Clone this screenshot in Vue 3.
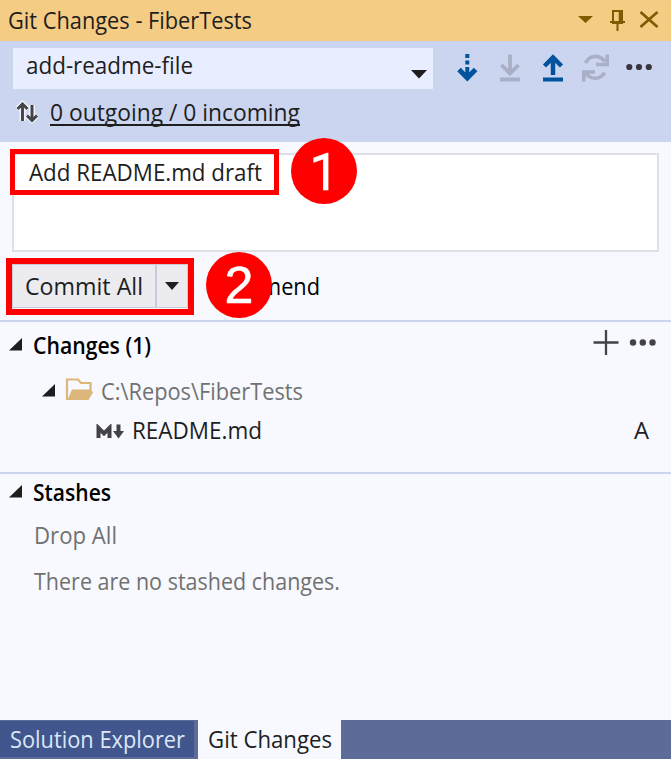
<script setup>
const label = (text, width) => ({ text, width })
const t = {
  title: label('Git Changes - FiberTests', 244),
  branch: label('add-readme-file', 167),
  sync: label('0 outgoing / 0 incoming', 250),
  message: label('Add README.md draft', 233),
  commit: label('Commit All', 118),
  amend: label('mend', 59),
  changes: label('Changes (1)', 118),
  path: label('C:\\Repos\\FiberTests', 202),
  file: label('README.md', 130),
  status: label('A', 15),
  stashes: label('Stashes', 78),
  drop: label('Drop All', 83),
  empty: label('There are no stashed changes.', 306),
  solution: label('Solution Explorer', 175),
  git: label('Git Changes', 124),
}
</script>

<template>
  <main class="panel">
    <header class="title">
      <svg class="text" :width="t.title.width" height="30"><text y="23" :textLength="t.title.width" lengthAdjust="spacingAndGlyphs">{{ t.title.text }}</text></svg>
      <svg class="window-icons" width="90" height="41" viewBox="0 0 90 41">
        <path d="M3 16h15l-7.500 7z" fill="#805900" />
        <path d="M38 11h9v12h-9zM35 22h15M42.500 23v8" fill="none" stroke="#805900" stroke-width="2" />
        <path d="M45 11v11" stroke="#805900" stroke-width="2.500" />
        <path d="M65.500 12l17 15M82.500 12l-17 15" stroke="#805900" stroke-width="2.700" />
      </svg>
    </header>

    <section class="toolbar">
      <div class="tools">
        <div class="combo">
          <svg class="text" :width="t.branch.width" height="30"><text y="23" :textLength="t.branch.width" lengthAdjust="spacingAndGlyphs">{{ t.branch.text }}</text></svg>
          <svg class="combo-arrow" width="16" height="9"><path d="M0 0h16L8 8.500z" fill="#1e1e1e" /></svg>
        </div>
        <svg class="tool-icons" width="238" height="41" viewBox="433 48 238 41">
          <g fill="none" stroke="#00539c" stroke-width="4">
            <path d="M467.300 54v4m0 2.500v4m0 2.500v9" />
            <path d="M459 69.500l8.300 8.500 8.300-8.500" stroke-width="5" />
            <path d="M553 75V58M544.500 66l8.500-8.500 8.500 8.500" stroke-width="4.500" />
            <path d="M543 79.500h20" />
          </g>
          <path d="M462 72h11l-5.500 8z" fill="#00539c" />
          <g fill="none" stroke="#a9afc5" stroke-width="3.800">
            <path d="M510 54.500v18M501.500 65l8.500 8.500 8.500-8.500M500 79.500h20" />
            <path d="M585.500 63c4-8.500 14-8.500 19.500-1.500M607.200 54.500v10H596M604.500 72.500c-4 7.500-13.500 7.500-18.500 1M583.700 81.500V72H595" stroke-width="3.600" />
          </g>
          <g fill="#37373d"><circle cx="629.300" cy="67" r="3.100" /><circle cx="639" cy="67" r="3.100" /><circle cx="648.800" cy="67" r="3.100" /></g>
        </svg>
      </div>
      <div class="sync">
        <svg width="22" height="26" viewBox="16 99 22 26" fill="none" stroke-linejoin="miter">
          <g stroke="#edf0fa" stroke-width="6"><path d="M22.500 121v-16M17 109.500l5.500-5.500 5.500 5.500M32 105v15M27 115l5 5 5-5" /></g>
          <g stroke="#424247" stroke-width="2.900"><path d="M22.500 121v-16M17.500 109l5-5 5 5M32 105v15M27 115.500l5 5 5-5" /></g>
        </svg>
        <a class="link"><svg class="text" :width="t.sync.width" height="30"><text y="23" :textLength="t.sync.width" lengthAdjust="spacingAndGlyphs">{{ t.sync.text }}</text></svg></a>
      </div>
    </section>

    <section class="commit">
      <div class="message">
        <svg class="text" :width="t.message.width" height="30"><text y="23" :textLength="t.message.width" lengthAdjust="spacingAndGlyphs">{{ t.message.text }}</text></svg>
      </div>
      <div class="actions">
        <div class="split-button">
          <div class="main-action"><svg class="text" :width="t.commit.width" height="30"><text y="23" :textLength="t.commit.width" lengthAdjust="spacingAndGlyphs">{{ t.commit.text }}</text></svg></div>
          <div class="drop-action"><svg width="14" height="9"><path d="M0 0h14L7 8z" fill="#1e1e1e" /></svg></div>
        </div>
        <svg class="text amend" :width="t.amend.width" height="30"><text y="23" :textLength="t.amend.width" lengthAdjust="spacingAndGlyphs">{{ t.amend.text }}</text></svg>
      </div>
      <div class="outline outline-one"></div>
      <div class="badge badge-one">1</div>
      <div class="outline outline-two"></div>
      <div class="badge badge-two">2</div>
    </section>

    <section class="changes">
      <div class="row heading">
        <svg class="triangle" width="13" height="13"><path d="M13 0v12.500H0z" /></svg>
        <svg class="text strong" :width="t.changes.width" height="30"><text y="23" :textLength="t.changes.width" lengthAdjust="spacingAndGlyphs">{{ t.changes.text }}</text></svg>
        <svg class="heading-icons" width="66" height="30" viewBox="592 328 66 30">
          <path d="M606 330v25M593.500 342.500h25" stroke="#424247" stroke-width="2.300" />
          <g fill="#424247"><circle cx="633" cy="342.500" r="3.200" /><circle cx="642.800" cy="342.500" r="3.200" /><circle cx="652.500" cy="342.500" r="3.200" /></g>
        </svg>
      </div>
      <div class="row folder">
        <svg class="triangle" width="13" height="13"><path d="M13 0v12.500H0z" /></svg>
        <svg class="folder-icon" width="28" height="23" viewBox="65 378 28 23">
          <path d="M68.500 399H67v-19.500h11l3 3.500h9.500v7" fill="none" stroke="#dcb67a" stroke-width="2.200" />
          <path d="M72 389.500h18v-1.500l3 4.500L88.500 400H67.500z" fill="#dcb67a" />
        </svg>
        <svg class="text muted" :width="t.path.width" height="30"><text y="23" :textLength="t.path.width" lengthAdjust="spacingAndGlyphs">{{ t.path.text }}</text></svg>
      </div>
      <div class="row file">
        <svg class="file-icon" width="28" height="15" viewBox="96 423 28 15" fill="none" stroke="#424247" stroke-width="4">
          <path d="M98.500 437v-10l5.500 5.500 5.500-5.500v10" />
          <path d="M118.500 423.500V434" /><path d="M113 430h11l-5.500 7.500z" fill="#424247" stroke="none" />
        </svg>
        <svg class="text" :width="t.file.width" height="30"><text y="23" :textLength="t.file.width" lengthAdjust="spacingAndGlyphs">{{ t.file.text }}</text></svg>
        <svg class="text status" :width="t.status.width" height="30"><text y="23" :textLength="t.status.width" lengthAdjust="spacingAndGlyphs">{{ t.status.text }}</text></svg>
      </div>
    </section>

    <section class="stashes">
      <div class="row heading">
        <svg class="triangle" width="13" height="13"><path d="M13 0v12.500H0z" /></svg>
        <svg class="text strong" :width="t.stashes.width" height="30"><text y="23" :textLength="t.stashes.width" lengthAdjust="spacingAndGlyphs">{{ t.stashes.text }}</text></svg>
      </div>
      <div class="row drop"><svg class="text muted" :width="t.drop.width" height="30"><text y="23" :textLength="t.drop.width" lengthAdjust="spacingAndGlyphs">{{ t.drop.text }}</text></svg></div>
      <div class="row empty"><svg class="text muted" :width="t.empty.width" height="30"><text y="23" :textLength="t.empty.width" lengthAdjust="spacingAndGlyphs">{{ t.empty.text }}</text></svg></div>
    </section>

    <nav class="tabs">
      <div class="tab"><svg class="text light" :width="t.solution.width" height="30"><text y="23" :textLength="t.solution.width" lengthAdjust="spacingAndGlyphs">{{ t.solution.text }}</text></svg></div>
      <div class="tab active"><svg class="text" :width="t.git.width" height="30"><text y="23" :textLength="t.git.width" lengthAdjust="spacingAndGlyphs">{{ t.git.text }}</text></svg></div>
    </nav>
  </main>
</template>

<style>
body { margin: 0; background: #f7f9fe; }
</style>

<style scoped>
* { box-sizing: border-box; }
.panel { width: 671px; height: 759px; display: flex; flex-direction: column; background: #f7f9fe; font-family: "Open Sans", "Noto Sans", sans-serif; overflow: hidden; }
svg { display: block; flex: none; }
.text { overflow: visible; fill: #1e1e1e; font-size: 23px; }
.muted { fill: #717171; }
.strong { fill: #000; font-weight: 600; }
.light { fill: #dce6f7; }
.title { height: 41px; display: flex; justify-content: space-between; background: #f5cc84; padding: 6px 0 0 8px; }
.window-icons { margin: -6px 6px 0 0; }
.toolbar { height: 101px; background: #ccd5f0; padding-top: 7px; }
.tools { display: flex; padding-left: 13px; }
.combo { width: 420px; height: 41px; background: #e8edff; display: flex; justify-content: space-between; padding: 3px 6px 0 13px; }
.combo-arrow { margin-top: 19px; }
.sync { display: flex; padding: 9px 0 0 16px; gap: 12px; }
.sync > svg { margin-top: 1px; }
.link { height: 28px; border-bottom: 2px solid #1e1e1e; }
.commit { position: relative; height: 180px; padding: 11px 12px 0; border-bottom: 2px solid #ccd5f0; }
.message { height: 99px; border: 2px solid #dedfe7; background: #fff; padding: 3px 0 0 15px; }
.actions { display: flex; align-items: flex-start; gap: 73px; margin-top: 12px; }
.amend { margin-top: 8px; fill: #000; }
.split-button { display: flex; width: 176px; height: 44px; border: 1px solid #c9ccd8; background: #ebebf0; }
.main-action { flex: 1; border-right: 2px solid #c9ccd8; padding: 7px 0 0 12px; }
.drop-action { width: 30px; display: grid; place-items: center; }
.outline { position: absolute; border: 5px solid red; }
.outline-one { left: 10px; top: 7px; width: 269px; height: 46px; }
.outline-two { left: 6px; top: 116px; width: 188px; height: 57px; border-width: 6px; }
.badge { position: absolute; width: 66px; height: 66px; border-radius: 50%; background: red; color: #fff; display: grid; place-items: center; font: 52px/66px "Liberation Sans", sans-serif; -webkit-text-stroke: 0.6px #fff; }
.badge-one { left: 291px; top: -4px; padding-top: 3px; font-family: Roboto, sans-serif; line-height: 63px; }
.badge-two { left: 206px; top: 110px; }
.row { display: flex; align-items: flex-start; }
.triangle { fill: #1e1e1e; }
.changes { height: 152px; border-bottom: 2px solid #ccd5f0; padding-top: 9px; }
.heading { padding-left: 9px; height: 46px; }
.heading .triangle { margin: 7px 11px 0 0; }
.heading-icons { margin: -3px 13px 0 auto; }
.folder { padding-left: 42px; height: 39px; }
.folder .triangle { margin: 7px 10px 0 0; }
.folder-icon { margin: 1px 8px 0 0; }
.file { padding-left: 96px; }
.file-icon { margin: 8px 8px 0 0; }
.status { margin: 0 22px 0 auto; }
.stashes { padding-top: 4px; flex: 1; }
.stashes .heading { height: 43px; }
.drop { padding-left: 34px; height: 46px; }
.empty { padding-left: 34px; }
.tabs { height: 39px; display: flex; background: #5d6b99; }
.tab { width: 198px; border: solid #5d6b99; border-width: 1px 4px 2px 0; background: #40568d; padding: 4px 0 0 10px; }
.tab.active { width: 143px; border: 0; background: #f7f9fe; padding-top: 5px; }
</style>
